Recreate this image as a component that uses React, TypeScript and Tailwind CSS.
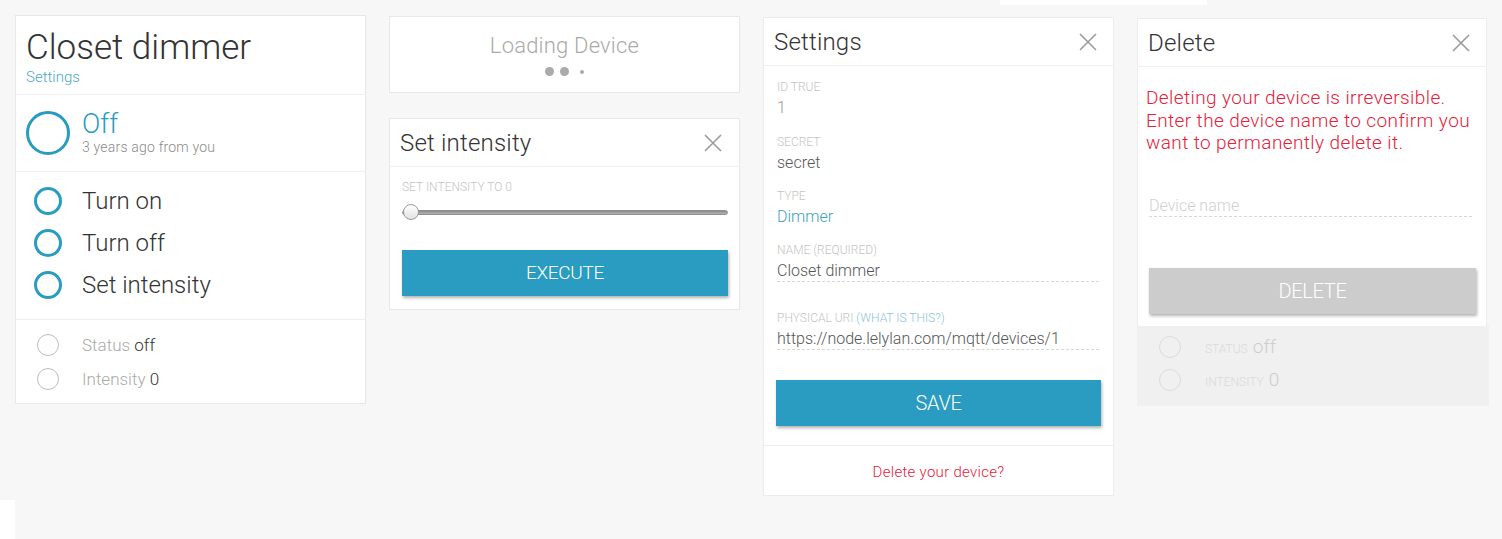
const TEAL = 'bg-[#2a9bc1]';

function CloseIcon() {
  return (
    <svg width="18" height="18" viewBox="0 0 18 18" className="shrink-0">
      <path d="M1 1 L17 17 M17 1 L1 17" stroke="#9a9a9a" strokeWidth="1.6" fill="none" />
    </svg>
  );
}

function ModalHeader({ title, x }: { title: string; x: string }) {
  return (
    <div className="h-[48px] flex items-center justify-between pl-[10px] border-b border-[#f0f0f0]" style={{ paddingRight: x }}>
      <span className="text-[24px] leading-[28px] text-[#333] tracking-[0.2px]">{title}</span>
      <CloseIcon />
    </div>
  );
}

function DeviceCard() {
  return (
    <div className="w-[351px] mt-[15px] bg-white border border-[#e8e8e8]">
      <div className="pt-[14px] px-[10px] pb-[8px] border-b border-[#f0f0f0]">
        <div className="text-[35px] leading-[35px] text-[#333]">Closet dimmer</div>
        <div className="mt-[3px] text-[15px] leading-[18px] text-[#4aa7cc]">Settings</div>
      </div>
      <div className="h-[77px] flex items-center px-[10px] gap-[12px] border-b border-[#f0f0f0]">
        <span className="w-[44px] h-[44px] rounded-full border-[3px] border-[#2a9bc1] shrink-0" />
        <div className="flex flex-col">
          <span className="text-[27px] leading-[28px] text-[#2a9bc1]">Off</span>
          <span className="text-[14px] leading-[18px] text-[#8a8a8a] tracking-[0.2px]">3 years ago from you</span>
        </div>
      </div>
      <div className="pt-[8px] pb-[13px] pl-[18px] border-b border-[#f0f0f0]">
        {['Turn on', 'Turn off', 'Set intensity'].map((a) => (
          <div key={a} className="h-[42px] flex items-center gap-[20px]">
            <span className="w-[28px] h-[28px] rounded-full border-[3px] border-[#2a9bc1] shrink-0" />
            <span className="text-[24px] leading-[28px] text-[#333]">{a}</span>
          </div>
        ))}
      </div>
      <div className="pt-[8px] pb-[7px] pl-[21px]">
        {[['Status', 'off'], ['Intensity', '0']].map(([k, v]) => (
          <div key={k} className="h-[34px] flex items-center gap-[23px]">
            <span className="w-[22px] h-[22px] rounded-full border border-[#bdbdbd] shrink-0" />
            <span className="text-[17px] leading-[20px] text-[#aaa]">
              {k} <span className="text-[#333]">{v}</span>
            </span>
          </div>
        ))}
      </div>
    </div>
  );
}

function LoadingCard() {
  return (
    <div className="h-[77px] bg-white border border-[#e8e8e8] flex flex-col items-center pt-[16px]">
      <span className="text-[22px] leading-[26px] text-[#aaa] tracking-[0.2px]">Loading Device</span>
      <div className="mt-[8px] flex items-center gap-[6px]">
        <span className="w-[9px] h-[9px] rounded-full bg-[#aaa]" />
        <span className="w-[9px] h-[9px] rounded-full bg-[#aaa]" />
        <span className="w-[4px] h-[4px] rounded-full bg-[#aaa] ml-[5px]" />
      </div>
    </div>
  );
}

function IntensityCard() {
  return (
    <div className="mt-[25px] bg-white border border-[#e8e8e8]">
      <ModalHeader title="Set intensity" x="17px" />
      <div className="pt-[13px] pl-[12px] pr-[11px] pb-[13px]">
        <div className="text-[12px] leading-[14px] text-[#c4c4c4] uppercase">Set intensity to 0</div>
        <div className="relative mt-[10px] h-[16px] flex items-center">
          <div className="w-full h-[5px] rounded-full bg-gradient-to-b from-[#8a8a8a] to-[#b5b5b5] border border-[#8e8e8e]" />
          <span className="absolute left-[1px] top-0 w-[16px] h-[16px] rounded-full border border-[#9a9a9a] bg-gradient-to-b from-white to-[#e2e2e2]" />
        </div>
        <button className={`mt-[30px] w-full h-[46px] ${TEAL} text-white text-[19px] font-light tracking-[-0.3px] shadow-[1px_2px_3px_rgba(0,0,0,0.3)]`}>
          EXECUTE
        </button>
      </div>
    </div>
  );
}

function Field({ label, value, color, dashed, hint }: { label: string; value: string; color: string; dashed?: boolean; hint?: string }) {
  return (
    <div>
      <div className="text-[12px] leading-[14px] text-[#c4c4c4] uppercase">
        {label}
        {hint && <span className="text-[#8fc3dc]"> {hint}</span>}
      </div>
      <div
        className={`mt-[4px] text-[16px] leading-[20px] ${color} ${dashed ? 'border-b border-dashed border-[#d6d6d6]' : ''}`}
      >
        {value}
      </div>
    </div>
  );
}

function SettingsCard() {
  return (
    <div className="w-[351px] mt-[17px] bg-white border border-[#ececec]">
      <ModalHeader title="Settings" x="16px" />
      <div className="pt-[14px] px-[12px] pb-[19px]">
        <div className="pl-[1px] pr-[2px] flex flex-col">
          <Field label="ID true" value="1" color="text-[#a09a94]" />
          <div className="h-[17px]" />
          <Field label="Secret" value="secret" color="text-[#555]" />
          <div className="h-[16px]" />
          <Field label="Type" value="Dimmer" color="text-[#3b9fc6]" />
          <div className="h-[16px]" />
          <Field label="Name (required)" value="Closet dimmer" color="text-[#555]" dashed />
          <div className="h-[29px]" />
          <Field label="Physical URI" hint="(WHAT IS THIS?)" value="https://node.lelylan.com/mqtt/devices/1" color="text-[#555]" dashed />
        </div>
        <button className={`mt-[30px] w-full h-[46px] ${TEAL} text-white text-[20px] font-light tracking-[-0.3px] shadow-[1px_2px_3px_rgba(0,0,0,0.3)]`}>
          SAVE
        </button>
      </div>
      <div className="h-[50px] border-t border-[#ececec] flex items-center justify-center pt-[3px]">
        <span className="text-[15px] text-[#e8203a] tracking-[0.3px]">Delete your device?</span>
      </div>
    </div>
  );
}

function DeleteCard() {
  return (
    <div className="w-[352px] mt-[18px]">
      <div className="w-[350px] bg-white border-t border-l border-r border-[#ececec]">
        <ModalHeader title="Delete" x="16px" />
        <div className="pt-[20px] pl-[8px] pr-[11px] pb-[12px]">
          <p className="text-[19px] leading-[22.5px] text-[#e8203a] tracking-[0.4px]">
            Deleting your device is irreversible.
            <br />
            Enter the device name to confirm you
            <br />
            want to permanently delete it.
          </p>
          <div className="mt-[41px] ml-[3px] mr-[3px] text-[16px] leading-[20px] text-[#cfcfcf] border-b border-dashed border-[#d6d6d6]">
            Device name
          </div>
          <button className="mt-[51px] ml-[3px] w-[327px] h-[46px] bg-[#cccccc] text-white text-[20px] font-light tracking-[-0.3px] shadow-[1px_2px_3px_rgba(0,0,0,0.3)]">
            DELETE
          </button>
        </div>
      </div>
      <div className="h-[80px] bg-[#f0f0f0] pt-[5px] pl-[22px]">
        {[['Status', 'off'], ['Intensity', '0']].map(([k, v]) => (
          <div key={k} className="h-[33px] flex items-center gap-[24px]">
            <span className="w-[22px] h-[22px] rounded-full border border-[#dcdcdc] shrink-0" />
            <span className="flex items-baseline">
              <span className="text-[12px] text-[#dadada] uppercase">{k}</span>
              <span className="ml-[5px] text-[19px] text-[#cdcdcd]">{v}</span>
            </span>
          </div>
        ))}
      </div>
    </div>
  );
}

export default function App() {
  return (
    <div className="relative w-[1502px] h-[539px] overflow-hidden bg-[#f7f7f7] font-['Roboto',sans-serif] font-light">
      <div className="absolute left-[1000px] top-0 w-[207px] h-[5px] bg-white" />
      <div className="absolute left-0 top-[500px] w-[15px] h-[39px] bg-white" />
      <div className="flex items-start pl-[15px] gap-[23px]">
        <DeviceCard />
        <div className="w-[351px] mt-[16px] flex flex-col">
          <LoadingCard />
          <IntensityCard />
        </div>
        <SettingsCard />
        <DeleteCard />
      </div>
    </div>
  );
}
